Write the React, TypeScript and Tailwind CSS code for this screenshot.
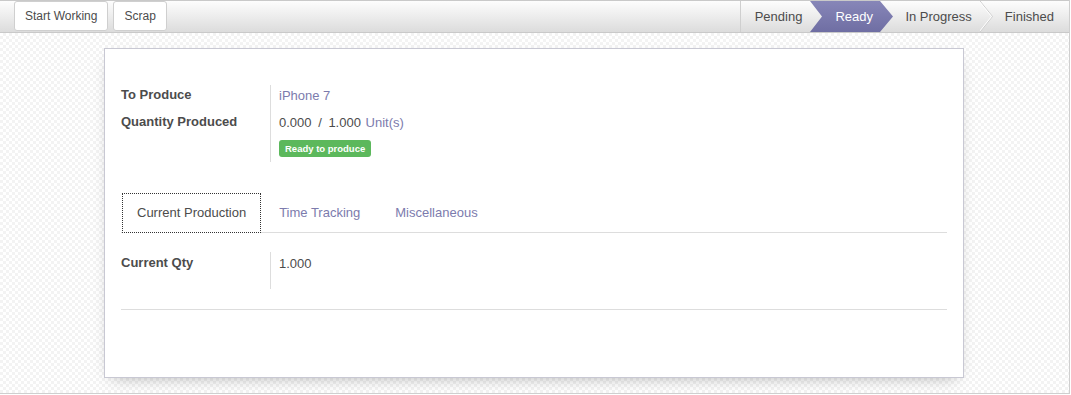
export default function App() {
  return (
    <div className="w-[1070px] h-[394px] flex flex-col border-r border-b border-[#cfcfcf] bg-white text-[13px] leading-[18px] text-[#4c4c4c] font-[family-name:Liberation_Sans,Arial,sans-serif] overflow-hidden">
      {/* control panel */}
      <div className="flex h-[33px] border-t border-b border-[#c9c9c9] bg-gradient-to-b from-[#fdfdfd] to-[#dcdcdc]">
        <div className="flex items-start gap-[5px] pl-[14px]">
          <button className="h-[30px] px-[10px] bg-white border border-[#cfcfcf] rounded-[3px] text-[12px]">
            Start Working
          </button>
          <button className="h-[30px] px-[10px] bg-white border border-[#cfcfcf] rounded-[3px] text-[12px]">
            Scrap
          </button>
        </div>
        <div className="ml-auto flex h-full">
          <div className="flex items-center border-l border-[#cfcfcf] pl-[14px] pr-[8px]">Pending</div>
          <div className="relative flex items-center w-[83px] pl-[25px] text-white">
            <svg className="absolute inset-0 w-full h-full" viewBox="0 0 83 31" preserveAspectRatio="none">
              <defs>
                <linearGradient id="rd" x1="0" y1="0" x2="0" y2="1">
                  <stop offset="0" stopColor="#8786b8" />
                  <stop offset="1" stopColor="#6f6ea3" />
                </linearGradient>
              </defs>
              <polygon points="0,0 70,0 83,15.5 70,31 0,31 12,15.5" fill="url(#rd)" />
            </svg>
            <span className="relative">Ready</span>
          </div>
          <div className="flex items-center pl-[12px] pr-[8px]">In Progress</div>
          <svg width="13" height="31" viewBox="0 0 13 31" className="shrink-0">
            <polyline points="0,0 12.5,15.5 0,31" fill="none" stroke="#cdcdcd" strokeWidth="1" />
            <polyline points="-1,0 11.5,15.5 -1,31" fill="none" stroke="#ffffff" strokeWidth="1" />
          </svg>
          <div className="flex items-center pl-[12px] pr-[15px]">Finished</div>
        </div>
      </div>

      {/* sheet background */}
      <div className="flex-1 pt-[15px] bg-[image:repeating-conic-gradient(#f3f3f3_0_25%,#ffffff_0_50%)] bg-[length:6px_6px]">
        <div className="ml-[104px] w-[860px] h-[330px] bg-white border border-[#c8c8d3] shadow-[0_6px_16px_-8px_rgba(0,0,0,0.35)] px-[16px] pt-[36px]">
          {/* main group */}
          <div className="flex">
            <div className="w-[149px] pt-[1px] font-bold flex flex-col gap-[9px]">
              <div>To Produce</div>
              <div>Quantity Produced</div>
            </div>
            <div className="border-l border-[#dddddd] pl-[8px] pt-[2px] pb-[5px]">
              <div className="text-[#7c7bad]">iPhone 7</div>
              <div className="mt-[9px]">
                0.000 <span className="mx-[3px]">/</span> 1.000 <span className="text-[#7c7bad] ml-[1px]">Unit(s)</span>
              </div>
              <div className="mt-[8px] inline-flex items-center h-[17px] px-[6px] rounded-[3px] bg-[#5cb85c] text-white font-bold text-[9.5px] leading-none">
                Ready to produce
              </div>
            </div>
          </div>

          {/* tabs */}
          <div className="mt-[31px] flex border-b border-[#dddddd] h-[40px]">
            <div className="h-[40px] -mb-px flex items-center px-[14px] ml-px border border-dotted border-[#333333] bg-white">
              Current Production
            </div>
            <div className="flex items-center pl-[18px] pr-[15px] text-[#7c7bad]">Time Tracking</div>
            <div className="flex items-center pl-[20px] pr-[15px] text-[#7c7bad]">Miscellaneous</div>
          </div>

          {/* tab content */}
          <div className="pt-[19px] pb-[20px] border-b border-[#dddddd] flex">
            <div className="w-[149px] pt-[2px] font-bold">Current Qty</div>
            <div className="h-[37px] border-l border-[#dddddd] pl-[8px] pt-[3px]">1.000</div>
          </div>
        </div>
      </div>
    </div>
  );
}
